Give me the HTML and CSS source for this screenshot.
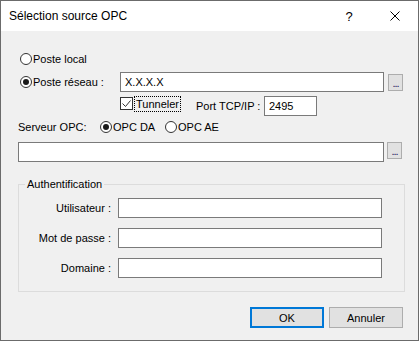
FILE: index.html
```html
<!DOCTYPE html>
<html lang="fr">

<head>
  <meta charset="UTF-8">
  <title>Sélection source OPC</title>
  <link rel="stylesheet" href="styles.css">
</head>

<body>
  <div class="window">
    <div class="titlebar">
      <span class="title">Sélection source OPC</span>
      <span class="cap-btn help">?</span>
      <span class="cap-btn close">
        <svg width="10" height="10" viewBox="0 0 10 10">
          <path d="M0.5 0.5 L9.5 9.5 M9.5 0.5 L0.5 9.5" stroke="#000" stroke-width="1" fill="none" />
        </svg>
      </span>
    </div>

    <div class="content">
      <div class="row row-local">
        <label class="radio"><span class="circle"></span>Poste local</label>
      </div>

      <div class="row row-host">
        <label class="radio radio-host"><span class="circle checked"></span>Poste réseau :</label>
        <input class="field field-host" type="text" value="X.X.X.X">
        <button class="browse">...</button>
      </div>

      <div class="row row-tunnel">
        <div class="tunnel">
          <span class="checkbox">
            <svg width="11" height="11" viewBox="0 0 11 11">
              <path d="M1.5 5.5 L4.5 8.5 L9.5 2.5" stroke="#333" stroke-width="1" fill="none" />
            </svg>
          </span>
          <span class="focus">Tunneler</span>
        </div>
        <span class="port-label">Port TCP/IP :</span>
        <input class="field field-port" type="text" value="2495">
      </div>

      <div class="row row-server">
        <span class="server-label">Serveur OPC:</span>
        <label class="radio radio-da"><span class="circle checked"></span>OPC DA</label>
        <label class="radio"><span class="circle"></span>OPC AE</label>
      </div>

      <div class="row row-server-name">
        <input class="field field-server" type="text" value="">
        <button class="browse">...</button>
      </div>

      <fieldset class="group">
        <legend>Authentification</legend>
        <div class="group-row">
          <span class="group-label">Utilisateur :</span>
          <input class="field field-group" type="text" value="">
        </div>
        <div class="group-row">
          <span class="group-label">Mot de passe :</span>
          <input class="field field-group" type="password" value="">
        </div>
        <div class="group-row">
          <span class="group-label">Domaine :</span>
          <input class="field field-group" type="text" value="">
        </div>
      </fieldset>

      <div class="actions">
        <button class="btn btn-default">OK</button>
        <button class="btn">Annuler</button>
      </div>
    </div>
  </div>
</body>

</html>
```

FILE: styles.css
```css
* {
  padding: 0;
  margin: 0;
  box-sizing: border-box;
}

body {
  font-family: "Liberation Sans", Arial, sans-serif;
  font-size: 11px;
  color: #000;
  background: #fff;
}

.window {
  width: 419px;
  height: 341px;
  border: 1px solid #6b6b6b;
  background: #f0f0f0;
  display: flex;
  flex-direction: column;
}

/* barre de titre */
.titlebar {
  height: 30px;
  background: #fff;
  display: flex;
  align-items: center;
  padding-left: 8px;
}

.title {
  flex: 1;
  font-size: 12px;
}

.cap-btn {
  width: 46px;
  height: 30px;
  display: flex;
  align-items: center;
  justify-content: center;
}

.help {
  font-size: 13px;
}

.content {
  flex: 1;
  display: flex;
  flex-direction: column;
  padding-left: 17px;
}

.row {
  display: flex;
  align-items: center;
}

.row-local {
  margin-top: 21px;
  height: 14px;
}

.row-host {
  margin-top: 6px;
  height: 20px;
}

.row-tunnel {
  margin-top: 4px;
  height: 20px;
  align-items: flex-start;
}

.row-server {
  margin-top: 4px;
  height: 14px;
}

.row-server-name {
  margin-top: 8px;
  height: 20px;
  align-items: flex-start;
}

/* boutons radio */
.radio {
  display: flex;
  align-items: center;
  gap: 1px;
  line-height: 14px;
}

.row-local .radio,
.radio-host {
  margin-left: 2px;
}

.radio-host {
  width: 100px;
}

.circle {
  width: 12px;
  height: 12px;
  border: 1px solid #333;
  border-radius: 50%;
  background: #fff;
  position: relative;
}

.circle.checked::after {
  content: "";
  position: absolute;
  left: 2px;
  top: 2px;
  width: 6px;
  height: 6px;
  border-radius: 50%;
  background: #1a1a1a;
}

/* champs */
.field {
  height: 20px;
  border: 1px solid #7a7a7a;
  background: #fff;
  font-family: "Liberation Sans", Arial, sans-serif;
  font-size: 11px;
  padding: 0 4px;
  outline: none;
}

.field-host {
  width: 264px;
}

.field-port {
  width: 53px;
}

.field-server {
  width: 366px;
}

.field-group {
  width: 264px;
}

.browse {
  width: 15px;
  height: 17px;
  margin-left: 4px;
  border: 1px solid #adadad;
  background: #e1e1e1;
  font-family: "Liberation Sans", Arial, sans-serif;
  font-size: 11px;
  line-height: 17px;
  color: #1a1a5a;
  letter-spacing: -1px;
  text-align: center;
}

.row-server-name .browse {
  margin-left: 3px;
}

/* case a cocher */
.tunnel {
  width: 76px;
  margin-left: 102px;
  display: flex;
  align-items: flex-start;
}

.checkbox {
  width: 13px;
  height: 13px;
  margin-top: 1px;
  border: 1px solid #333;
  background: #fff;
  display: flex;
}

.focus {
  margin-left: 1px;
  height: 16px;
  padding: 0 1px;
  border: 1px dotted #000;
  line-height: 14px;
}

.port-label {
  width: 68px;
  line-height: 20px;
}

.server-label {
  width: 82px;
  line-height: 14px;
}

.radio-da {
  width: 65px;
}

/* groupe authentification */
.group {
  margin-top: 16px;
  width: 387px;
  border: 1px solid #dcdcdc;
  padding: 7px 6px 13px 6px;
  display: flex;
  flex-direction: column;
  gap: 10px;
}

.group legend {
  padding: 0 2px;
  line-height: 13px;
}

.group-row {
  display: flex;
  align-items: center;
  height: 20px;
}

.group-label {
  width: 86px;
  margin-right: 7px;
  text-align: right;
}

/* boutons du bas */
.actions {
  margin-top: 15px;
  margin-right: 15px;
  display: flex;
  justify-content: flex-end;
  gap: 5px;
}

.btn {
  width: 74px;
  height: 21px;
  border: 1px solid #adadad;
  background: #e1e1e1;
  font-family: "Liberation Sans", Arial, sans-serif;
  font-size: 11px;
  color: #000;
}

.btn-default {
  border: 2px solid #0078d7;
}
```
